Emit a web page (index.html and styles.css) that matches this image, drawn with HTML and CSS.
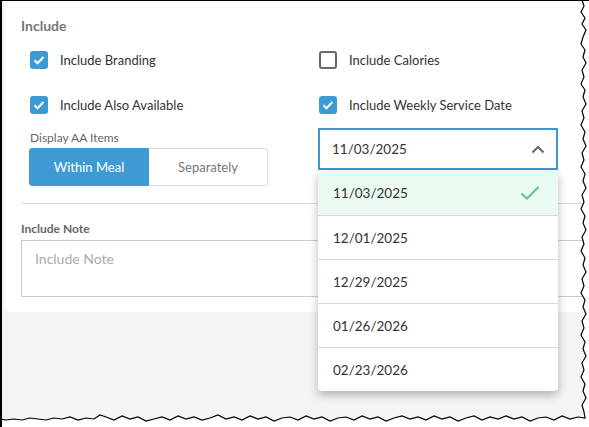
FILE: index.html
```html
<!DOCTYPE html>
<html lang="en">
<head>
  <meta charset="UTF-8">
  <title>Include Options</title>
  <link rel="stylesheet" href="styles.css">
</head>
<body>
<div class="shot">
  <div class="card">
    <h3 class="section_title">Include</h3>

    <div class="options">
      <label class="check">
        <span class="box checked"><svg viewBox="0 0 18 18"><path d="M4.5 9.2l3 3 6-6.2" /></svg></span>
        Include Branding
      </label>
      <label class="check">
        <span class="box"></span>
        Include Calories
      </label>

      <label class="check">
        <span class="box checked"><svg viewBox="0 0 18 18"><path d="M4.5 9.2l3 3 6-6.2" /></svg></span>
        Include Also Available
      </label>
      <label class="check">
        <span class="box checked"><svg viewBox="0 0 18 18"><path d="M4.5 9.2l3 3 6-6.2" /></svg></span>
        Include Weekly Service Date
      </label>

      <div class="aa_items">
        <div class="small_label">Display AA Items</div>
        <div class="segmented">
          <button type="button" class="active">Within Meal</button>
          <button type="button">Separately</button>
        </div>
      </div>

      <div class="select_wrap">
        <div class="select">
          <span>11/03/2025</span>
          <svg class="chevron" viewBox="0 0 14 9"><path d="M1.5 7.5l5.5-5.5 5.5 5.5" /></svg>
        </div>
        <ul class="menu">
          <li class="selected">11/03/2025
            <svg class="tick" viewBox="0 0 20 14"><path d="M1.5 7.5l5.5 5 11.5-11.5" /></svg>
          </li>
          <li>12/01/2025</li>
          <li>12/29/2025</li>
          <li>01/26/2026</li>
          <li>02/23/2026</li>
        </ul>
      </div>
    </div>

    <hr class="divider">

    <div class="note_label">Include Note</div>
    <div class="note">Include Note</div>
  </div>

  <svg class="torn" viewBox="0 0 589 427">
    <polygon class="torn_fill" points="582,0 584,6 581,12 585,18 582,24 586,30 583,37 581,44 585,50 583,57 586,63 582,70 584,77 581,84 585,90 583,97 586,104 582,111 584,118 581,125 585,132 583,139 586,146 582,153 584,160 581,167 585,174 583,181 586,188 582,195 584,202 581,209 585,216 583,223 586,230 582,237 584,244 581,251 585,258 583,265 586,272 582,279 584,286 581,293 585,300 583,307 586,314 582,321 584,328 581,335 585,342 583,349 586,356 582,363 584,370 581,377 585,384 583,391 586,398 582,405 584,412 585,418 578,417 570,419 562,416 554,420 546,417 538,418 530,421 522,417 514,419 506,416 498,419 490,417 482,420 474,416 466,418 458,421 450,417 442,419 434,416 426,420 418,417 410,419 402,416 394,418 386,421 378,417 370,419 362,416 354,420 346,417 338,418 330,421 322,417 314,419 306,416 298,420 290,417 282,418 274,421 266,417 258,419 250,416 242,420 234,417 226,419 218,415 210,418 202,420 194,417 186,419 178,416 170,420 162,417 154,419 146,421 138,417 130,419 122,416 114,420 106,417 100,415 94,419 86,418 78,420 70,417 62,419 54,418 46,420 38,419 30,418 22,420 14,419 6,420 0,419 0,427 589,427 589,0" />
    <polyline class="torn_line" points="582,0 584,6 581,12 585,18 582,24 586,30 583,37 581,44 585,50 583,57 586,63 582,70 584,77 581,84 585,90 583,97 586,104 582,111 584,118 581,125 585,132 583,139 586,146 582,153 584,160 581,167 585,174 583,181 586,188 582,195 584,202 581,209 585,216 583,223 586,230 582,237 584,244 581,251 585,258 583,265 586,272 582,279 584,286 581,293 585,300 583,307 586,314 582,321 584,328 581,335 585,342 583,349 586,356 582,363 584,370 581,377 585,384 583,391 586,398 582,405 584,412 585,418 578,417 570,419 562,416 554,420 546,417 538,418 530,421 522,417 514,419 506,416 498,419 490,417 482,420 474,416 466,418 458,421 450,417 442,419 434,416 426,420 418,417 410,419 402,416 394,418 386,421 378,417 370,419 362,416 354,420 346,417 338,418 330,421 322,417 314,419 306,416 298,420 290,417 282,418 274,421 266,417 258,419 250,416 242,420 234,417 226,419 218,415 210,418 202,420 194,417 186,419 178,416 170,420 162,417 154,419 146,421 138,417 130,419 122,416 114,420 106,417 100,415 94,419 86,418 78,420 70,417 62,419 54,418 46,420 38,419 30,418 22,420 14,419 6,420 0,419" />
  </svg>
</div>
</body>
</html>
```

FILE: styles.css
```css
* {
  box-sizing: border-box;
}

body {
  margin: 0;
  background: white;
  font-family: Lato, 'Noto Sans', sans-serif;
  color: #333;
}

.shot {
  position: relative;
  width: 589px;
  height: 427px;
  overflow: hidden;
  background: #f4f4f4;
  border-top: 1px solid #000;
  border-left: 2px solid #000;
}

.card {
  width: 620px;
  margin-left: 3px;
  background: #fff;
  border-radius: 0 0 6px 6px;
  padding: 15px 0 15px 16px;
}

.section_title {
  margin: 0;
  font-size: 14px;
  line-height: 20px;
  font-weight: bold;
  color: #777;
}

.options {
  display: grid;
  grid-template-columns: 288px 240px;
  grid-template-rows: 45px 46px auto;
  padding-left: 9px;
  margin-top: 1px;
}

.check {
  display: flex;
  align-items: center;
  gap: 12px;
  font-size: 13px;
  color: #333;
}

.box {
  width: 18px;
  height: 18px;
  border: 2px solid #666;
  border-radius: 3px;
  flex-shrink: 0;
}

.options .check:nth-child(even) .box {
  margin-left: 1px;
}

.box.checked {
  border: none;
  background: #3d9ad3;
}

.box svg {
  display: block;
  width: 18px;
  height: 18px;
  fill: none;
  stroke: #fff;
  stroke-width: 2;
}

.small_label {
  font-size: 12px;
  line-height: 16px;
  color: #666;
  margin-top: 2px;
}

.segmented {
  display: flex;
  width: 239px;
  height: 38px;
  margin-top: 2px;
  margin-left: -1px;
}

.segmented button {
  flex: 1;
  font-family: inherit;
  font-size: 13px;
  color: #777;
  background: #fff;
  border: 1px solid #ddd;
  border-left: none;
  border-radius: 0 3px 3px 0;
  cursor: pointer;
}

.segmented button.active {
  background: #3d9ad3;
  border: 1px solid #3d9ad3;
  color: #fff;
  border-radius: 3px 0 0 3px;
}

.select_wrap {
  position: relative;
}

.select {
  display: flex;
  align-items: center;
  justify-content: space-between;
  height: 42px;
  padding: 0 11px 0 12px;
  border: 2px solid #3d97cf;
  font-size: 13.5px;
}

.chevron {
  width: 14px;
  height: 9px;
  fill: none;
  stroke: #666;
  stroke-width: 2;
}

.menu {
  position: absolute;
  top: 43px;
  left: 0;
  width: 240px;
  margin: 0;
  padding: 0;
  list-style: none;
  background: #fff;
  border-radius: 0 0 4px 4px;
  box-shadow: 0 4px 10px rgba(0, 0, 0, 0.28);
  z-index: 2;
}

.menu li {
  display: flex;
  align-items: center;
  justify-content: space-between;
  height: 44px;
  padding: 0 18px 0 15px;
  font-size: 13.5px;
  color: #333;
  border-top: 1px solid #d9d9d9;
}

.menu li:first-child {
  border-top: none;
}

.menu li.selected {
  background: #ebfaf0;
}

.tick {
  width: 20px;
  height: 14px;
  fill: none;
  stroke: #66c488;
  stroke-width: 2;
}

.divider {
  border: none;
  border-top: 1px solid #ddd;
  margin: 17px 0 0;
}

.note_label {
  font-size: 12px;
  line-height: 16px;
  font-weight: bold;
  color: #666;
  margin-top: 17px;
}

.note {
  height: 57px;
  margin-top: 3px;
  border: 1px solid #ccc;
  padding: 9px 13px;
  font-size: 14px;
  color: #aaa;
}

.torn {
  position: absolute;
  top: -1px;
  left: -2px;
  width: 589px;
  height: 427px;
}

.torn_fill {
  fill: #fff;
}

.torn_line {
  fill: none;
  stroke: #000;
  stroke-width: 1.2;
}
```
